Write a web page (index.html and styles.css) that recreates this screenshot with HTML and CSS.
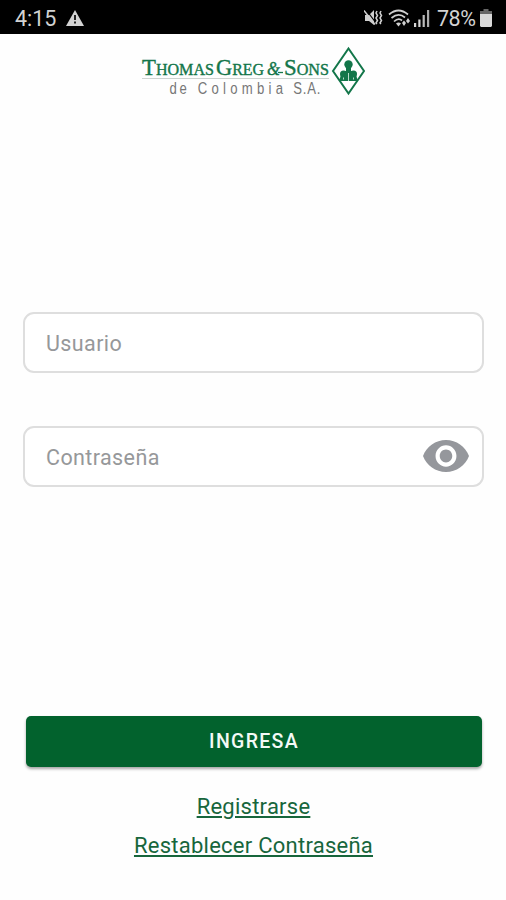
FILE: index.html
```html
<!DOCTYPE html>
<html lang="es">
<head>
<meta charset="utf-8">
<meta name="viewport" content="width=device-width, initial-scale=1">
<title>Ingresa</title>
<link rel="stylesheet" href="styles.css">
</head>
<body>
<div class="status">
  <span class="time">4:15</span>
  <svg class="warn" width="18" height="16" viewBox="0 0 18 16"><path d="M9 0 18 16H0Z" fill="#d2d2d2"/><path d="M8 5h2v5H8zM8 11.5h2v2H8z" fill="#222"/></svg>
  <svg class="mute" width="19" height="18" viewBox="0 0 19 18" fill="none" stroke="#cfcfcf"><path d="M1 6h4l5-5v15l-5-4H1Z" fill="#cfcfcf" stroke="none"/><path d="M1.500 0 12 14" stroke="#000" stroke-width="1.200"/><path d="m0 1.500 11 14" stroke-width="1.400"/><path d="m13 2-1 2 1.500 2.500-1.500 2.500 1.500 2.500-1.500 2.500 1 1M17 2l-1 2 1.500 2.500-1.500 2.500 1.500 2.500-1.500 2.500 1 1" stroke-width="1.500"/></svg>
  <svg class="wifi" width="23" height="18" viewBox="0 0 23 18" fill="none" stroke="#cfcfcf" stroke-width="1.700"><path d="M1 5.500Q10.500-2.500 20 5.500M3.500 9q7-6 13.500-.5M6 12.500q4.500-4.200 8-1"/><path d="m8 14.500 2.500 3 2.500-3q-2.500-2-5 0Z" fill="#cfcfcf" stroke="none"/><path d="m14 14 2-2.500 2 2.500-2 3ZM18 12l2-3 2 3-2 2.500Z" fill="#cfcfcf" stroke="none"/></svg>
  <svg class="signal" width="16" height="17" viewBox="0 0 16 17"><path d="M0 13h2.200v4H0zM4.300 9.500h2.200V17H4.300z" fill="#d5d5d5"/><path d="M8.600 5h2.200v12H8.600z" fill="#bbb"/><path d="M13 0h2.200v17H13z" fill="#aaa"/></svg>
  <span class="percent">78%</span>
  <svg class="battery" width="12" height="18" viewBox="0 0 12 18"><path d="M3.500 0h5v2H12v4H0V2h3.500z" fill="#666"/><path d="M0 5h12v12l-1 1H1l-1-1z" fill="#d8d8d8"/></svg>
</div>
<main class="screen">
  <svg class="logo" width="226" height="50" viewBox="0 0 226 50" role="img">
    <g class="brand">
      <text x="2" y="29" textLength="72" lengthAdjust="spacingAndGlyphs"><tspan class="cap">T</tspan>HOMAS</text>
      <text x="76" y="29" textLength="48" lengthAdjust="spacingAndGlyphs"><tspan class="cap">G</tspan>REG</text>
      <text x="144" y="29" textLength="45" lengthAdjust="spacingAndGlyphs"><tspan class="cap">S</tspan>ONS</text>
      <text class="amp" x="127" y="29" textLength="13" lengthAdjust="spacingAndGlyphs">&amp;</text>
    </g>
    <path d="M138 26.500h5" stroke="#16774b" stroke-width="1.300"/>
    <path d="M2 32.500h187" stroke="#cdd3d0"/>
    <g class="country" transform="scale(.82 1)">
      <text x="36" y="48" textLength="21">de</text>
      <text x="70.500" y="48" textLength="104">Colombia</text>
      <text x="187" y="48" textLength="33">S.A.</text>
    </g>
    <path d="m208.500 2.500 15.500 22.500-15.500 22.500-15.500-22.500Z" fill="#fff" stroke="#13764a" stroke-width="2"/>
    <g fill="#13764a"><circle cx="208.500" cy="18.500" r="4.200"/><path d="M206 21h5v4h-5zM201 29h15l2 6h-19z"/><circle cx="203.500" cy="28" r="3.500"/><circle cx="213.500" cy="28" r="3.500"/><path d="M205 25h7v10h-7z"/></g>
    <path d="M208.500 27v8M203.500 31.500v2M213.500 31.500v2" stroke="#b9dccb" stroke-width="1"/>
  </svg>
  <form class="form">
    <label class="field">Usuario</label>
    <label class="field">Contraseña
      <svg class="eye" width="46" height="32" viewBox="1 4.500 22 15" preserveAspectRatio="none"><path fill="#95979c" d="M12 4.500C7 4.500 2.730 7.610 1 12c1.730 4.390 6 7.500 11 7.500s9.270-3.110 11-7.500c-1.730-4.390-6-7.500-11-7.500zM12 17c-2.760 0-5-2.240-5-5s2.240-5 5-5 5 2.240 5 5-2.240 5-5 5zm0-8c-1.660 0-3 1.340-3 3s1.340 3 3 3 3-1.340 3-3-1.340-3-3-3z"/></svg>
    </label>
  </form>
  <button class="submit" type="button">INGRESA</button>
  <nav class="links">
    <a class="register" href="#">Registrarse</a>
    <a class="reset" href="#">Restablecer Contraseña</a>
  </nav>
</main>
</body>
</html>
```
FILE: styles.css
```css
* { box-sizing: border-box; }
body {
  margin: 0;
  height: 900px;
  background: #fefefe;
  font-family: Roboto, "Liberation Sans", sans-serif;
}
.status {
  height: 34px;
  padding: 2px 14px 0 15px;
  display: flex;
  align-items: center;
  background: #000;
  color: #d2d2d2;
  font-size: 21.5px;
}
.status svg { flex: none; }
.time { width: 51px; }
.mute { margin-left: auto; }
.wifi { margin-left: 5px; }
.signal { margin-left: 3px; }
.percent { width: 40px; margin-left: 7px; letter-spacing: -0.5px; }
.battery { margin-left: 3px; }
.screen {
  display: flex;
  flex-direction: column;
  padding: 12px 22px 0 23px;
}
.logo { margin-left: 117px; }
.brand { font: 17px "Liberation Serif", serif; fill: #13764a; stroke: #13764a; stroke-width: 0.4px; }
.cap { font-size: 24px; }
.amp { font-style: italic; font-size: 18px; }
.country { font: 16px "Liberation Sans", sans-serif; fill: #777; }
.form {
  margin-top: 216px;
  display: flex;
  flex-direction: column;
  gap: 53px;
}
.field {
  height: 61px;
  padding: 1px 14px 0 21px;
  display: flex;
  align-items: center;
  justify-content: space-between;
  border: 2px solid #dedede;
  border-radius: 11px;
  background: #fff;
  color: #96989a;
  font-size: 21.5px;
  letter-spacing: 0.4px;
}
.eye { margin: -2px -1px 0 0; }
.submit {
  height: 51px;
  margin: 229px 2px 0 3px;
  padding: 0;
  border: 0;
  border-radius: 5px;
  background: #02622d;
  box-shadow: 0 2px 3px rgba(0, 0, 0, 0.35);
  color: #f4faf6;
  font: 500 19.5px Roboto, sans-serif;
  letter-spacing: 1.3px;
}
.links {
  margin-top: 21px;
  display: flex;
  flex-direction: column;
  align-items: center;
  font-size: 22px;
  line-height: 38.5px;
  letter-spacing: 0.25px;
}
.links a { color: #17663c; text-underline-offset: 2px; text-decoration-thickness: 2px; }
```
